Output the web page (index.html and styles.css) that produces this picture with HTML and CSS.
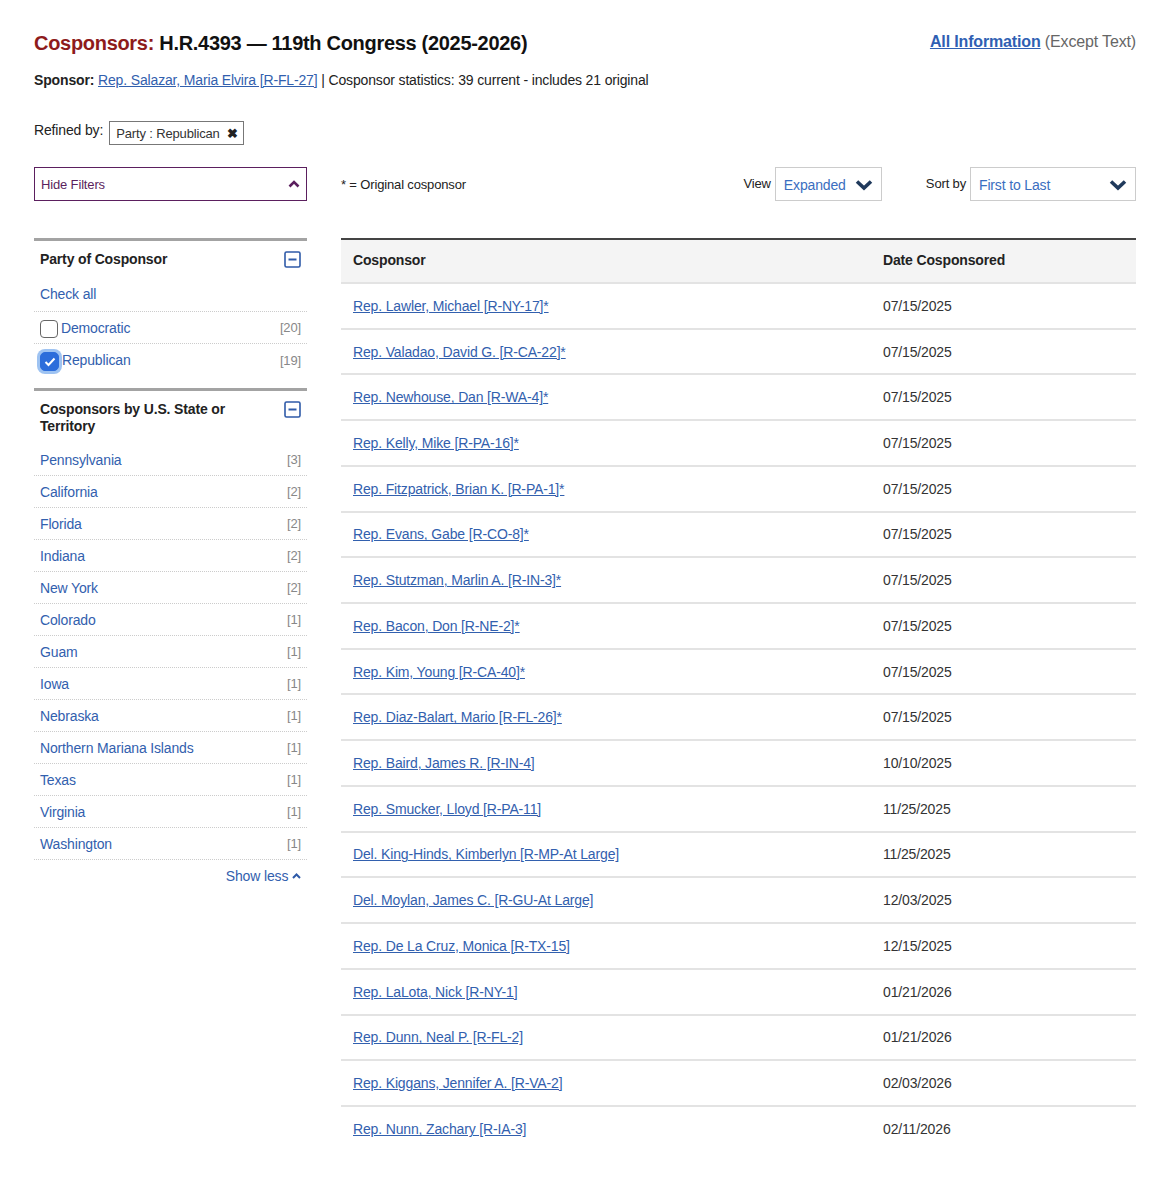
FILE: index.html
```html
<!DOCTYPE html>
<html lang="en">
<head>
<meta charset="utf-8">
<title>Cosponsors: H.R.4393 — 119th Congress (2025-2026)</title>
<link rel="stylesheet" href="styles.css">
</head>
<body>
<div class="page">
  <header class="top">
    <h1 class="title"><span class="title-label">Cosponsors:</span> H.R.4393 — 119th Congress (2025-2026)</h1>
    <div class="allinfo"><a href="#" class="allinfo-link">All Information</a> (Except Text)</div>
  </header>
  <p class="sponsor"><b>Sponsor:</b> <a href="#">Rep. Salazar, Maria Elvira [R-FL-27]</a> | Cosponsor statistics: 39 current - includes 21 original</p>

  <div class="refined">
    <span class="refined-label">Refined by:</span>
    <span class="tag">Party : Republican <span class="tag-x">✖</span></span>
  </div>

  <div class="toolbar">
    <button class="hide-filters">Hide Filters
      <svg class="up" width="12" height="8" viewBox="0 0 12 8"><path d="M1.5 6.5 L6 2 L10.5 6.5" fill="none" stroke="#5b1f5e" stroke-width="2.6"/></svg>
    </button>
    <div class="toolbar-main">
      <span class="legend">* = Original cosponsor</span>
      <div class="controls">
        <span class="ctl-label">View</span>
        <div class="select select-view">Expanded
          <svg class="chev" width="18" height="12" viewBox="0 0 18 12"><path d="M2 2.5 L9 9 L16 2.5" fill="none" stroke="#203a5c" stroke-width="3.6"/></svg>
        </div>
        <span class="ctl-label ctl-sort">Sort by</span>
        <div class="select select-sort">First to Last
          <svg class="chev" width="18" height="12" viewBox="0 0 18 12"><path d="M2 2.5 L9 9 L16 2.5" fill="none" stroke="#203a5c" stroke-width="3.6"/></svg>
        </div>
      </div>
    </div>
  </div>

  <div class="content">
    <aside class="sidebar">
      <section class="facet">
        <div class="facet-head">
          <h3>Party of Cosponsor</h3>
          <svg class="minus" width="17" height="17" viewBox="0 0 17 17"><rect x="1" y="1" width="15" height="15" rx="1.5" fill="none" stroke="#2f5aa8" stroke-width="1.6"/><path d="M4.5 8.5 H12.5" stroke="#2f5aa8" stroke-width="2"/></svg>
        </div>
        <div class="check-all">Check all</div>
        <ul class="facet-list">
          <li class="facet-item"><span class="cb"></span><span class="facet-name">Democratic</span><span class="count">[20]</span></li>
          <li class="facet-item"><span class="cb cb-on"><svg width="12" height="10" viewBox="0 0 12 10"><path d="M1.5 5 L4.5 8 L10.5 1.5" fill="none" stroke="#fff" stroke-width="2"/></svg></span><span class="facet-name">Republican</span><span class="count">[19]</span></li>
        </ul>
      </section>
      <section class="facet facet-state">
        <div class="facet-head">
          <h3>Cosponsors by U.S. State or Territory</h3>
          <svg class="minus" width="17" height="17" viewBox="0 0 17 17"><rect x="1" y="1" width="15" height="15" rx="1.5" fill="none" stroke="#2f5aa8" stroke-width="1.6"/><path d="M4.5 8.5 H12.5" stroke="#2f5aa8" stroke-width="2"/></svg>
        </div>
        <ul class="facet-list state-list">
          <li class="facet-item"><span class="facet-name">Pennsylvania</span><span class="count">[3]</span></li>
          <li class="facet-item"><span class="facet-name">California</span><span class="count">[2]</span></li>
          <li class="facet-item"><span class="facet-name">Florida</span><span class="count">[2]</span></li>
          <li class="facet-item"><span class="facet-name">Indiana</span><span class="count">[2]</span></li>
          <li class="facet-item"><span class="facet-name">New York</span><span class="count">[2]</span></li>
          <li class="facet-item"><span class="facet-name">Colorado</span><span class="count">[1]</span></li>
          <li class="facet-item"><span class="facet-name">Guam</span><span class="count">[1]</span></li>
          <li class="facet-item"><span class="facet-name">Iowa</span><span class="count">[1]</span></li>
          <li class="facet-item"><span class="facet-name">Nebraska</span><span class="count">[1]</span></li>
          <li class="facet-item"><span class="facet-name">Northern Mariana Islands</span><span class="count">[1]</span></li>
          <li class="facet-item"><span class="facet-name">Texas</span><span class="count">[1]</span></li>
          <li class="facet-item"><span class="facet-name">Virginia</span><span class="count">[1]</span></li>
          <li class="facet-item"><span class="facet-name">Washington</span><span class="count">[1]</span></li>
        </ul>
        <div class="show-less">Show less <svg width="9" height="6" viewBox="0 0 9 6"><path d="M1 5 L4.5 1.5 L8 5" fill="none" stroke="#2f5aa8" stroke-width="2"/></svg></div>
      </section>
    </aside>

    <main class="main">
      <table class="cos-table">
        <colgroup><col class="col1"><col class="col2"></colgroup>
        <thead>
          <tr><th>Cosponsor</th><th>Date Cosponsored</th></tr>
        </thead>
        <tbody>
          <tr><td><a href="#">Rep. Lawler, Michael [R-NY-17]*</a></td><td>07/15/2025</td></tr>
          <tr><td><a href="#">Rep. Valadao, David G. [R-CA-22]*</a></td><td>07/15/2025</td></tr>
          <tr><td><a href="#">Rep. Newhouse, Dan [R-WA-4]*</a></td><td>07/15/2025</td></tr>
          <tr><td><a href="#">Rep. Kelly, Mike [R-PA-16]*</a></td><td>07/15/2025</td></tr>
          <tr><td><a href="#">Rep. Fitzpatrick, Brian K. [R-PA-1]*</a></td><td>07/15/2025</td></tr>
          <tr><td><a href="#">Rep. Evans, Gabe [R-CO-8]*</a></td><td>07/15/2025</td></tr>
          <tr><td><a href="#">Rep. Stutzman, Marlin A. [R-IN-3]*</a></td><td>07/15/2025</td></tr>
          <tr><td><a href="#">Rep. Bacon, Don [R-NE-2]*</a></td><td>07/15/2025</td></tr>
          <tr><td><a href="#">Rep. Kim, Young [R-CA-40]*</a></td><td>07/15/2025</td></tr>
          <tr><td><a href="#">Rep. Diaz-Balart, Mario [R-FL-26]*</a></td><td>07/15/2025</td></tr>
          <tr><td><a href="#">Rep. Baird, James R. [R-IN-4]</a></td><td>10/10/2025</td></tr>
          <tr><td><a href="#">Rep. Smucker, Lloyd [R-PA-11]</a></td><td>11/25/2025</td></tr>
          <tr><td><a href="#">Del. King-Hinds, Kimberlyn [R-MP-At Large]</a></td><td>11/25/2025</td></tr>
          <tr><td><a href="#">Del. Moylan, James C. [R-GU-At Large]</a></td><td>12/03/2025</td></tr>
          <tr><td><a href="#">Rep. De La Cruz, Monica [R-TX-15]</a></td><td>12/15/2025</td></tr>
          <tr><td><a href="#">Rep. LaLota, Nick [R-NY-1]</a></td><td>01/21/2026</td></tr>
          <tr><td><a href="#">Rep. Dunn, Neal P. [R-FL-2]</a></td><td>01/21/2026</td></tr>
          <tr><td><a href="#">Rep. Kiggans, Jennifer A. [R-VA-2]</a></td><td>02/03/2026</td></tr>
          <tr class="last"><td><a href="#">Rep. Nunn, Zachary [R-IA-3]</a></td><td>02/11/2026</td></tr>
        </tbody>
      </table>
    </main>
  </div>
</div>
</body>
</html>
```

FILE: styles.css
```css
* { box-sizing: border-box; }
html, body { margin: 0; padding: 0; background: #fff; }
body {
  font-family: "Liberation Sans", Arial, sans-serif;
  color: #222;
  font-size: 14px;
  letter-spacing: -0.15px;
}
a { color: #3260ae; text-decoration: underline; }

.page {
  width: 1171px;
  padding: 30px 35px 0 34px;
}

.top {
  display: flex;
  justify-content: space-between;
  align-items: flex-start;
}
.title {
  margin: 0;
  font-size: 20px;
  line-height: 26px;
  font-weight: bold;
  color: #111;
  letter-spacing: -0.3px;
}
.title-label { color: #8e1b1b; }
.allinfo {
  font-size: 16px;
  line-height: 22px;
  color: #666;
  margin-top: 1px;
}
.allinfo-link { font-weight: bold; color: #2f5fb3; }

.sponsor {
  margin: 15px 0 0 0;
  font-size: 14px;
  line-height: 18px;
  color: #222;
}

.refined {
  display: flex;
  align-items: flex-start;
  margin-top: 32px;
  gap: 6px;
}
.refined-label {
  font-size: 14px;
  line-height: 18px;
}
.tag {
  display: inline-flex;
  align-items: center;
  height: 24px;
  padding: 0 5px 0 6px;
  border: 1px solid #777;
  font-size: 13px;
  color: #333;
  margin-top: 0;
}
.tag-x { margin-left: 7px; font-size: 13px; color: #222; font-weight: bold; }

.toolbar {
  display: flex;
  margin-top: 22px;
  gap: 34px;
  height: 34px;
}
.hide-filters {
  width: 273px;
  height: 34px;
  border: 1px solid #5b1f5e;
  background: #fff;
  color: #5b1f5e;
  font-family: "Liberation Sans", Arial, sans-serif;
  font-size: 13px;
  letter-spacing: -0.15px;
  display: flex;
  align-items: center;
  justify-content: space-between;
  padding: 0 6px 0 6px;
  text-align: left;
}
.toolbar-main {
  flex: 1;
  display: flex;
  justify-content: space-between;
  align-items: center;
}
.legend { font-size: 13px; color: #222; }
.controls { display: flex; align-items: flex-start; height: 34px; }
.ctl-label { font-size: 13px; color: #222; margin-right: 4px; padding-top: 9px; }
.ctl-sort { margin-left: 44px; }
.select {
  height: 34px;
  border: 1px solid #ccc;
  display: flex;
  align-items: center;
  justify-content: space-between;
  padding: 2px 8px 0 8px;
  font-size: 14px;
  color: #3a6ec0;
}
.select-view { width: 107px; }
.select-sort { width: 166px; }
.chev { display: block; }

.content {
  display: flex;
  gap: 34px;
  margin-top: 37px;
}

.sidebar { width: 273px; flex: none; }
.facet { border-top: 3px solid #a3a3a3; }
.facet-head {
  display: flex;
  justify-content: space-between;
  align-items: flex-start;
  padding: 10px 6px 0 6px;
}
.facet-head h3 {
  margin: 0;
  font-size: 14px;
  line-height: 17px;
  font-weight: bold;
  color: #222;
  max-width: 210px;
}
.minus { flex: none; }
.check-all {
  color: #3260ae;
  font-size: 14px;
  line-height: 18px;
  padding: 17px 6px 8px 6px;
  border-bottom: 1px dotted #ccc;
}
.facet-list { list-style: none; margin: 0; padding: 0; }
.facet-item {
  display: flex;
  align-items: center;
  height: 32px;
  padding: 0 6px;
  border-bottom: 1px dotted #ccc;
  font-size: 14px;
  color: #3260ae;
}
.facet-list .facet-item:last-child { border-bottom: none; }
.state-list .facet-item:last-child { border-bottom: 1px dotted #ccc; }
.facet-name { flex: 1; }
.count { color: #888; font-size: 13px; }
.cb {
  width: 18px;
  height: 18px;
  border: 1.5px solid #666;
  border-radius: 4px;
  margin-right: 3px;
  flex: none;
  margin-top: 3px;
  background: #fff;
  display: flex;
  align-items: center;
  justify-content: center;
}
.cb-on {
  width: 19px;
  height: 19px;
  background: #2c6ddb;
  border-color: #2c6ddb;
  border-radius: 5px;
  box-shadow: 0 0 0 3px #9ec3f2;
}
.facet-state { margin-top: 12px; }
.facet-state .facet-head { padding-top: 10px; padding-bottom: 9px; }
.show-less {
  text-align: right;
  font-size: 14px;
  color: #3260ae;
  padding: 8px 6px 0 0;
}
.show-less svg { vertical-align: 2px; }

.main { flex: 1; }
.cos-table {
  width: 100%;
  table-layout: fixed;
  border-collapse: collapse;
  border-top: 2px solid #444;
  font-size: 14px;
}
.col1 { width: 530px; }
.cos-table th {
  text-align: left;
  background: #f4f4f4;
  font-weight: bold;
  color: #222;
  height: 44px;
  padding: 0 12px 2px 12px;
  border-bottom: 2px solid #e3e3e3;
}
.cos-table td {
  height: 45.72px;
  padding: 0 12px;
  border-bottom: 2px solid #e3e3e3;
  color: #333;
}
.cos-table tr.last td { border-bottom: none; }
```
